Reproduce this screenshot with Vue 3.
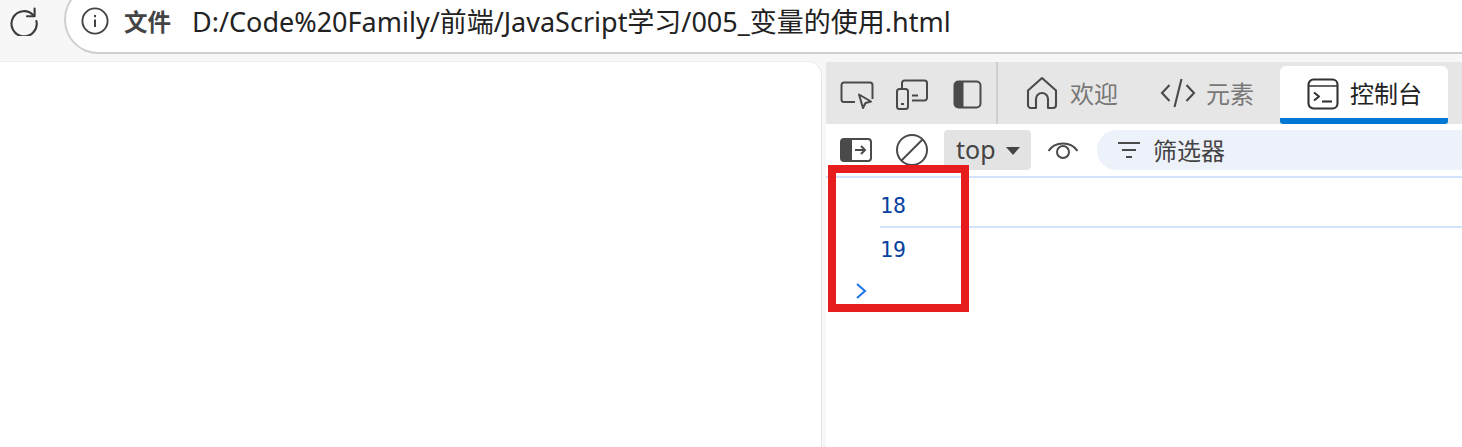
<script setup>
const tabs = [
  { label: '欢迎', icon: 'home' },
  { label: '元素', icon: 'code' },
  { label: '控制台', icon: 'console', active: true }
]
</script>

<template>
  <div class="window">
    <header class="topbar">
      <button class="reload" aria-label="reload">
        <svg width="32" height="32" viewBox="0 0 32 32" fill="none" stroke="#3b3b3b" stroke-width="2.1">
          <path d="M25.6 11.5A12.6 12.6 0 1 0 28.4 17" stroke-linecap="round"/>
          <path d="M26.6 4.6v7.6h-7.6" stroke-linecap="round" stroke-linejoin="round"/>
        </svg>
      </button>
      <div class="omnibox">
        <svg class="info" width="28" height="28" viewBox="0 0 28 28" fill="none" stroke="#444" stroke-width="1.9">
          <circle cx="14" cy="14" r="12.6"/>
          <path d="M14 12.5v7.5" stroke-width="2"/>
          <path d="M14 8v2.2" stroke-width="2"/>
        </svg>
        <span class="scheme">文件</span>
        <span class="url">D:/Code%20Family/前端/JavaScript学习/005_变量的使用.html</span>
      </div>
    </header>

    <main class="main">
      <section class="page"></section>
      <section class="devtools">
        <div class="tabbar">
          <div class="tools">
            <svg width="34" height="30" viewBox="0 0 34 30" fill="none" stroke="#4a4a4a" stroke-width="2">
              <path d="M15 22H4a2.5 2.5 0 0 1-2.5-2.5V5A2.5 2.5 0 0 1 4 2.5h26A2.5 2.5 0 0 1 32.500 5v14"/>
              <path d="M19 14.500l12 7-5.500 1.500-2.500 5z" stroke-linejoin="round"/>
            </svg>
            <svg width="34" height="32" viewBox="0 0 34 32" fill="none" stroke="#4a4a4a" stroke-width="2">
              <path d="M7 9V4a2.500 2.500 0 0 1 2.500-2.500h20A2.500 2.500 0 0 1 32 4v15a2.500 2.500 0 0 1-2.500 2.500H17"/>
              <rect x="2" y="10" width="11" height="20" rx="2.500"/>
              <path d="M6 25h3M17 16.500h6"/>
            </svg>
            <svg class="dock" width="30" height="30" viewBox="0 0 30 30">
              <rect x="1.500" y="1.500" width="26" height="26" rx="4" fill="none" stroke="#4a4a4a" stroke-width="2"/>
              <path d="M5.500 1.500H10.500v26H5.500a4 4 0 0 1-4-4v-18a4 4 0 0 1 4-4z" fill="#4a4a4a"/>
            </svg>
          </div>
          <div class="tabs">
            <div v-for="tab in tabs" :key="tab.label" class="tab" :class="[tab.icon, { active: tab.active }]">
              <svg v-if="tab.icon === 'home'" width="32" height="34" viewBox="0 0 32 34" fill="none" stroke="#4a4a4a" stroke-width="2.100" stroke-linejoin="round">
                <path d="M2 14.500L16 2l14 12.500V29a3 3 0 0 1-3 3h-5v-9a6 6 0 0 0-12 0v9H5a3 3 0 0 1-3-3z"/>
              </svg>
              <svg v-else-if="tab.icon === 'code'" width="36" height="32" viewBox="0 0 36 32" fill="none" stroke="#4a4a4a" stroke-width="2.100">
                <path d="M9.500 8L2 16l7.500 8M26.500 8L34 16l-7.500 8M21.500 2L14.500 30"/>
              </svg>
              <svg v-else width="32" height="32" viewBox="0 0 32 32" fill="none" stroke="#333" stroke-width="2.100">
                <rect x="1.500" y="1.500" width="29" height="29" rx="5"/>
                <path d="M2 8h28" stroke-width="1.500"/>
                <path d="M7 14.500l5 4-5 4" stroke-linejoin="round"/>
                <path d="M15 23.500h10"/>
              </svg>
              <span>{{ tab.label }}</span>
            </div>
          </div>
        </div>

        <div class="filterbar">
          <svg class="sidebar-icon" width="32" height="24" viewBox="0 0 32 24">
            <rect x="1" y="1" width="30" height="22" rx="3" fill="none" stroke="#4a4a4a" stroke-width="2"/>
            <path d="M4 1h8v22H4a3 3 0 0 1-3-3V4a3 3 0 0 1 3-3z" fill="#4a4a4a"/>
            <path d="M15 12h10M21 8l4 4-4 4" fill="none" stroke="#4a4a4a" stroke-width="2"/>
          </svg>
          <svg class="clear" width="34" height="34" viewBox="0 0 34 34" fill="none" stroke="#4a4a4a" stroke-width="2">
            <circle cx="17" cy="17" r="15"/>
            <path d="M6.500 27.500L27.500 6.500"/>
          </svg>
          <div class="context">
            <span>top</span>
            <i class="caret"></i>
          </div>
          <svg class="eye" width="32" height="20" viewBox="0 0 32 20" fill="none" stroke="#4a4a4a" stroke-width="2">
            <path d="M1.500 11C8 1 24 1 30.500 11"/>
            <circle cx="16" cy="12" r="6"/>
          </svg>
          <div class="filter">
            <svg width="24" height="18" viewBox="0 0 24 18" fill="none" stroke="#4a4a4a" stroke-width="2.200">
              <path d="M1 2h22M5 9h14M9 16h6"/>
            </svg>
            <span>筛选器</span>
          </div>
        </div>

        <div class="log">
          <div class="line first">18</div>
          <div class="line">19</div>
          <svg class="prompt" width="12" height="18" viewBox="0 0 12 18" fill="none" stroke="#1a73e8" stroke-width="2">
            <path d="M2 2l8 7-8 7"/>
          </svg>
        </div>
      </section>
    </main>

    <div class="annotation"></div>
  </div>
</template>

<style>
html, body { margin: 0; background: #f7f7f7; }
</style>

<style scoped>
.window {
  position: relative;
  width: 1462px;
  height: 447px;
  overflow: hidden;
  background: #f7f7f7;
  font-family: "Noto Sans", "Noto Sans CJK SC", sans-serif;
}
.topbar {
  height: 61px;
  display: flex;
  align-items: flex-start;
  padding-left: 8px;
  box-sizing: border-box;
}
.reload {
  width: 32px;
  height: 32px;
  margin-top: 4px;
  padding: 0;
  border: 0;
  background: none;
  display: flex;
}
.omnibox {
  flex: 1;
  height: 69px;
  margin: -15px 0 0 24px;
  box-sizing: border-box;
  display: flex;
  align-items: center;
  padding: 3px 0 0 15px;
  background: #fff;
  border: 2px solid #cfcfcf;
  border-right: 0;
  border-radius: 34px 0 0 34px;
  color: #222;
}
.info { flex: none; }
.scheme {
  margin-left: 15px;
  font: 700 23.500px "Noto Sans CJK SC", sans-serif;
  color: #444;
}
.url {
  margin-left: 21px;
  font-size: 27px;
  margin-top: -2px;
  white-space: nowrap;
  color: #222;
}
.main {
  display: flex;
  height: 386px;
}
.page {
  width: 822px;
  background: #fff;
  border-top-right-radius: 14px;
  border-right: 1px solid #e6e6e6;
  border-top: 1px solid #eee;
  box-sizing: border-box;
}
.devtools {
  margin-left: 4px;
  flex: 1;
  background: #fff;
  min-width: 0;
  margin-top: 1px;
}
.tabbar {
  height: 62px;
  background: #e6e6e6;
  display: flex;
  align-items: stretch;
}
.tools {
  width: 172px;
  box-sizing: border-box;
  border-right: 2px solid #cfcfcf;
  display: flex;
  align-items: center;
  gap: 22px;
  padding: 4px 0 0 14px;
  flex: none;
}
.tools svg { flex: none; margin-right: -1px; }
.tools .dock { margin-left: 3px; margin-right: -4px; }
.tabs {
  display: flex;
  align-items: stretch;
  flex: 1;
  padding-left: 28px;
}
.tab {
  display: flex;
  align-items: center;
  gap: 12px;
  font-size: 24px;
  color: #777;
  white-space: nowrap;
  box-sizing: border-box;
}
.tab span { margin-top: -2px; }
.tab.code { margin-left: 42px; gap: 10px; }
.tab.console {
  margin-left: 26px;
  width: 168px;
  margin-top: 4px;
  padding: 4px 0 0 27px;
  gap: 11px;
  background: #fff;
  color: #222;
  border-radius: 6px 6px 3px 3px;
  border-bottom: 6px solid #0078d4;
}
.tab.console span { margin-top: -4px; }
.filterbar {
  height: 54px;
  box-sizing: border-box;
  border-bottom: 2px solid #d3e3fd;
  display: flex;
  align-items: center;
  position: relative;
}
.sidebar-icon { margin-left: 14px; flex: none; }
.clear { margin-left: 23px; flex: none; }
.context {
  margin-left: 15px;
  width: 87px;
  height: 40px;
  box-sizing: border-box;
  padding-left: 12px;
  background: #e3e3e3;
  border-radius: 4px;
  display: flex;
  align-items: center;
  gap: 10px;
  font-size: 25px;
  color: #444;
  flex: none;
}
.context span { margin-top: -2px; }
.caret {
  width: 0;
  height: 0;
  margin-top: 2px;
  border: 7.500px solid transparent;
  border-top: 8px solid #444;
  border-bottom: 0;
}
.eye { margin-left: 16px; flex: none; }
.filter {
  margin-left: 18px;
  flex: 1;
  height: 40px;
  display: flex;
  align-items: center;
  gap: 12px;
  padding-left: 20px;
  background: #edf1fa;
  border-radius: 20px 0 0 20px;
  font-size: 24px;
  color: #444;
}
.filter span { margin-top: -2px; }
.log {
  padding-left: 54px;
  position: relative;
}
.line {
  font: 21.500px "DejaVu Sans Mono", "Liberation Mono", monospace;
  color: #0842a0;
  height: 44px;
  line-height: 44px;
}
.line.first {
  height: 50px;
  line-height: 56px;
  border-bottom: 2px solid #d3e3fd;
  box-sizing: border-box;
}
.prompt {
  display: block;
  margin: 10px 0 0 -25px;
}
.annotation {
  position: absolute;
  left: 828px;
  top: 165px;
  width: 141px;
  height: 147px;
  box-sizing: border-box;
  border: 8px solid #e71c1c;
  pointer-events: none;
}
</style>
